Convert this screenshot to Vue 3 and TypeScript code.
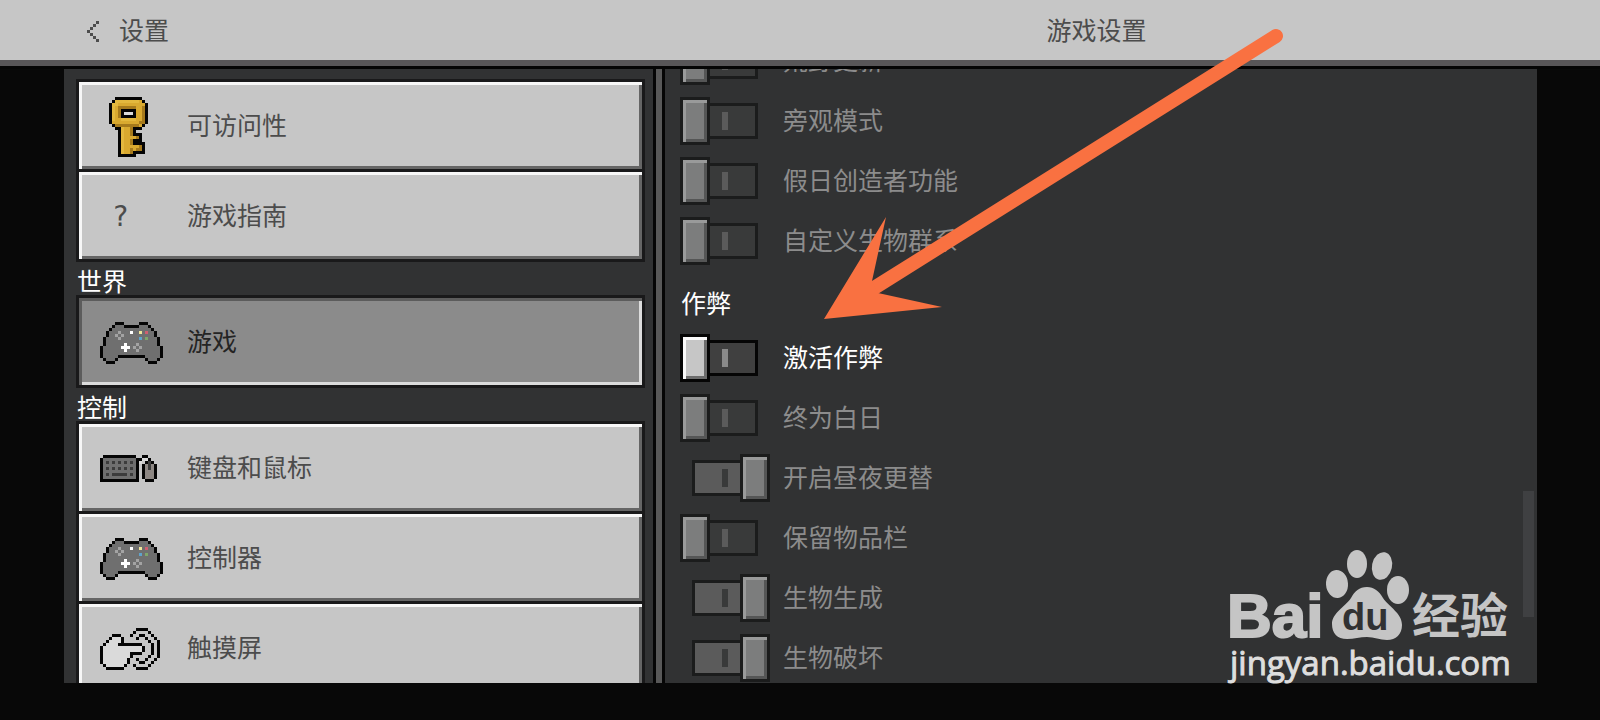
<script setup lang="ts">
import { ref } from 'vue'

interface PixelIcon {
  rows: string[]
}

interface NavItem {
  id: string
  label: string
  icon: PixelIcon | null
}

interface NavGroup {
  title: string
  items: NavItem[]
}

interface Toggle {
  id: string
  label: string
  on: boolean
  enabled: boolean
}

const palette: Record<string, string> = {
  B: '#050505',
  y: '#d9a92f',
  h: '#e3b83e',
  d: '#a67a1c',
  g: '#6f6f6f',
  l: '#a3a3a3',
  W: '#ffffff',
  w: '#dadada',
  k: '#3c3c3c',
  m: '#8d8783',
  Y: '#efe79a',
  R: '#cf5f70',
  U: '#5fa3cb',
  G: '#7fa66a',
  c: '#4d4d4d',
}

const keyIcon: PixelIcon = {
  rows: [
    '.....BBBBBBBBB..',
    '....BhhhhhhhhyB.',
    '...BhhyyyyyyyyyB',
    '...BhyddddddyydB',
    '...BhydBBBBByydB',
    '...BhydBwwwByydB',
    '...BhydBBBBByydB',
    '...BhyyhhhhhyydB',
    '...ByyyyyyyyyddB',
    '....BddddddddyB.',
    '.....BBhyydBBB..',
    '......BhyydB....',
    '......BhyydBBB..',
    '......BhyyyydB..',
    '......BhyydBBB..',
    '......BhyydBBBB.',
    '......BhyyyyydB.',
    '......BhyydyddB.',
    '......BhyydBBBB.',
    '......BBBBBB....',
  ],
}

const gamepadIcon: PixelIcon = {
  rows: [
    '.....BBB.....BBB.....',
    '....BgggBBBBBgggB....',
    '...BgggggggggggggB...',
    '..BggglgggWggYgRggB..',
    '..BgglglggggggggggB..',
    '.BgggglggggggUgGgggB.',
    '.BgggggggggggggggggB.',
    '.BggggggWggglggggggB.',
    'BggggggWWWglglggggggB',
    'BgggggggWggglgggggggB',
    'BgggggggggggggggggggB',
    'BgggggBBBBBBBBBgggggB',
    '.BgggB.........BgggB.',
    '..BBB...........BBB..',
  ],
}

const keyboardIcon: PixelIcon = {
  rows: [
    '.BBBBBBBBBBB..BB...',
    'BgggggggggggBBwwB..',
    'BgkgkgkgkgkgBw.BkB.',
    'BgggggggggggB.BmkmB',
    'BgkgkgkgkgkgB.BmkmB',
    'BgggggggggggB.BmmmB',
    'BgkgkkkkkgkgB.BmmmB',
    'BgggggggggggB.BmmmB',
    'BBBBBBBBBBBBB..BBB.',
  ],
}

const touchIcon: PixelIcon = {
  rows: [
    '............BBBB....',
    '...........B....B...',
    '....BBB...B..BB..B..',
    '...BwwwB....B..B..B.',
    '..BwwwwB........B..B',
    '.BwwwwBBBBBBBB...B.B',
    'BwwwwwwwwwwwwwB..B.B',
    'BwwwwwwwwwwwwwB..B.B',
    'BwwwwwwwwwBBBB...B.B',
    'BwwwwwwwwwB.....B..B',
    'BwwwwwwwwB..B..B..B.',
    'BwwwwwwwwB...BB..B..',
    '.BwwwwwwB..B....B...',
    '..BBBBBB....BBBB....',
  ],
}

const backIcon: PixelIcon = {
  rows: ['...c', '..c.', '.c..', 'c...', '.c..', '..c.', '...c'],
}

function pixels(icon: PixelIcon) {
  return icon.rows.flatMap((row, y) =>
    [...row]
      .map((key, x) => ({ x, y, fill: palette[key] }))
      .filter((p) => p.fill !== undefined),
  )
}

const groups: NavGroup[] = [
  {
    title: '',
    items: [
      { id: 'accessibility', label: '可访问性', icon: keyIcon },
      { id: 'guide', label: '游戏指南', icon: null },
    ],
  },
  { title: '世界', items: [{ id: 'game', label: '游戏', icon: gamepadIcon }] },
  {
    title: '控制',
    items: [
      { id: 'keyboard', label: '键盘和鼠标', icon: keyboardIcon },
      { id: 'controller', label: '控制器', icon: gamepadIcon },
      { id: 'touch', label: '触摸屏', icon: touchIcon },
    ],
  },
]

const selected = ref('game')

const experiments = ref<Toggle[]>([
  { id: 'wild', label: '荒野更新', on: false, enabled: false },
  { id: 'spectator', label: '旁观模式', on: false, enabled: false },
  { id: 'holiday', label: '假日创造者功能', on: false, enabled: false },
  { id: 'biomes', label: '自定义生物群系', on: false, enabled: false },
])

const cheats = ref<Toggle[]>([
  { id: 'cheats', label: '激活作弊', on: false, enabled: true },
  { id: 'always-day', label: '终为白日', on: false, enabled: false },
  { id: 'day-cycle', label: '开启昼夜更替', on: true, enabled: false },
  { id: 'keep-inventory', label: '保留物品栏', on: false, enabled: false },
  { id: 'mob-spawning', label: '生物生成', on: true, enabled: false },
  { id: 'mob-griefing', label: '生物破坏', on: true, enabled: false },
])
</script>

<template>
  <div class="screen">
    <header class="topbar">
      <button class="back" type="button">
        <svg class="pix" width="12" height="21" viewBox="0 0 4 7" aria-hidden="true">
          <rect v-for="(p, i) in pixels(backIcon)" :key="i" :x="p.x" :y="p.y" width="1" height="1" :fill="p.fill" />
        </svg>
        <span>设置</span>
      </button>
      <h1 class="title">游戏设置</h1>
    </header>

    <main class="body">
      <nav class="sidebar">
        <section v-for="group in groups" :key="group.title" class="group">
          <h2 v-if="group.title" class="group-title">{{ group.title }}</h2>
          <button
            v-for="item in group.items"
            :key="item.id"
            type="button"
            class="nav-item"
            :class="{ selected: item.id === selected }"
            @click="selected = item.id"
          >
            <span class="icon-slot">
              <svg
                v-if="item.icon"
                class="pix"
                :width="item.icon.rows[0].length * 3"
                :height="item.icon.rows.length * 3"
                :viewBox="`0 0 ${item.icon.rows[0].length} ${item.icon.rows.length}`"
                aria-hidden="true"
              >
                <rect v-for="(p, i) in pixels(item.icon)" :key="i" :x="p.x" :y="p.y" width="1" height="1" :fill="p.fill" />
              </svg>
              <span v-else class="question">?</span>
            </span>
            <span>{{ item.label }}</span>
          </button>
        </section>
      </nav>

      <div class="divider"></div>

      <section class="content">
        <div class="options">
          <label v-for="t in experiments" :key="t.id" class="option" :class="{ off: !t.enabled }">
            <input v-model="t.on" class="toggle" type="checkbox" :disabled="!t.enabled" />
            <span>{{ t.label }}</span>
          </label>
          <h2 class="options-title">作弊</h2>
          <label v-for="t in cheats" :key="t.id" class="option" :class="{ off: !t.enabled }">
            <input v-model="t.on" class="toggle" type="checkbox" :disabled="!t.enabled" />
            <span>{{ t.label }}</span>
          </label>
        </div>
        <div class="scroll-thumb"></div>
      </section>
    </main>

    <svg class="arrow" width="480" height="310" viewBox="815 20 480 310" aria-hidden="true">
      <path d="M1276 36 L874 288" stroke="#f97141" stroke-width="14" stroke-linecap="round" />
      <path d="M824 319 L886 217 L872 281 L878 293 L942 307 Z" fill="#f97141" />
    </svg>

    <svg class="watermark" width="300" height="145" viewBox="0 0 300 145">
      <g fill="#c5c5c5">
        <text class="wm-bai" x="7" y="97">Bai</text>
        <ellipse cx="117" cy="44" rx="11" ry="14" transform="rotate(-4 117 44)" />
        <ellipse cx="137" cy="24" rx="10" ry="14" />
        <ellipse cx="162" cy="26" rx="10" ry="14" transform="rotate(12 162 26)" />
        <ellipse cx="178" cy="50" rx="11" ry="14" />
        <path
          d="M147 47C154 47 159 51 163 58C169 67 182 73 182 85C182 94 176 100 167 100C160 100 154 97 147 97C140 97 134 99 127 99C117 99 112 93 112 84C112 73 125 67 131 58C135 51 139 47 147 47Z"
        />
        <text class="wm-cn" x="192" y="93">经验</text>
      </g>
      <text class="wm-du" x="122" y="90">du</text>
      <text class="wm-url" x="10" y="135">jingyan.baidu.com</text>
    </svg>
  </div>
</template>

<style>
body {
  background: #080808;
}
</style>

<style scoped>
.screen {
  position: relative;
  display: flex;
  flex-direction: column;
  height: 100vh;
  overflow: hidden;
  background: #080808;
  font-family: 'Liberation Sans', 'Noto Sans CJK SC', sans-serif;
  font-size: 25px;
  line-height: 33px;
  color: #fff;
}

.screen *,
.screen *::before,
.screen *::after {
  box-sizing: border-box;
}

h1,
h2 {
  margin: 0;
  font-size: inherit;
  font-weight: 400;
}

button {
  font: inherit;
  text-align: left;
  cursor: pointer;
}

.pix {
  display: block;
  shape-rendering: crispEdges;
}

.topbar,
.body {
  display: grid;
  grid-template-columns: 592fr 881fr;
  padding: 0 63px 0 64px;
}

.topbar {
  flex: none;
  align-items: center;
  height: 69px;
  background: #c6c6c6;
  border-bottom: 3px solid #050505;
  box-shadow: inset 0 -6px #585658;
  padding-bottom: 3px;
  color: #4c4c4c;
}

.back {
  display: flex;
  align-items: center;
  gap: 20px;
  padding: 0 0 0 23px;
  border: 0;
  background: none;
  color: inherit;
}

.title {
  text-align: center;
}

.body {
  grid-template-columns: 592fr 6px 875fr;
  flex: 1;
  min-height: 0;
  margin-bottom: 37px;
}

.divider {
  background: #585858;
}

.sidebar {
  min-height: 0;
  overflow: hidden;
  padding: 10px 8px 0 12px;
  background: #313233;
  border-right: 3px solid #050505;
}

.group {
  display: flex;
  flex-direction: column;
}

.group-title {
  height: 33px;
  padding-left: 1px;
  line-height: 41px;
}

.nav-item {
  display: flex;
  align-items: center;
  gap: 24px;
  height: 93px;
  padding: 2px 21px 0;
  border: 3px solid #19191a;
  border-radius: 0;
  background: #c6c6c6;
  box-shadow:
    inset 0 3px #f7f7f7,
    inset 3px 0 #f7f7f7,
    inset 0 -3px #656565,
    inset -3px 0 #656565;
  color: #4c4c4c;
}

.nav-item + .nav-item {
  margin-top: -3px;
}

.nav-item.selected {
  background: #8b8b8b;
  box-shadow:
    inset 0 3px #5c5c5c,
    inset 3px 0 #5c5c5c,
    inset 0 -3px #dcdcdc,
    inset -3px 0 #dcdcdc;
  color: #242424;
}

.icon-slot {
  width: 63px;
}

.question {
  padding-left: 12px;
  font-family: 'DejaVu Sans Mono', monospace;
  font-size: 28px;
}

.content {
  display: flex;
  justify-content: space-between;
  min-height: 0;
  overflow: hidden;
  padding: 0 3px 0 12px;
  background: #313233;
  border-left: 3px solid #050505;
}

.options {
  flex: 1;
  padding-left: 3px;
  margin-top: -38px;
}

.option {
  display: flex;
  align-items: center;
  gap: 13px;
  height: 60px;
}

.option.off {
  color: #8c8c8c;
}

.options-title {
  height: 57px;
  padding-left: 1px;
  line-height: 67px;
}

.toggle {
  --edge: #050505;
  --face: #c6c6c6;
  --light: #fafafa;
  --shade: #6d6d6d;
  --track: #404040;
  --mark: #8a8a8a;
  display: grid;
  flex: none;
  align-items: center;
  width: 90px;
  height: 48px;
  margin: 0;
  appearance: none;
}

.toggle:disabled {
  --edge: #1b1c1c;
  --face: #7c7d7d;
  --light: #999a9a;
  --shade: #555656;
  --track: #393a3a;
  --mark: #5b5b5b;
}

.toggle:checked {
  --track: #5b5b5b;
  --mark: #393a3a;
}

.toggle::before,
.toggle::after {
  content: '';
  grid-area: 1 / 1;
}

.toggle::before {
  justify-self: center;
  width: 66px;
  height: 36px;
  border: 3px solid var(--edge);
  background: linear-gradient(var(--mark), var(--mark)) center / 6px 18px no-repeat var(--track);
}

.toggle::after {
  justify-self: start;
  width: 30px;
  height: 48px;
  border: 3px solid var(--edge);
  background: var(--face);
  box-shadow:
    inset 0 3px var(--light),
    inset 3px 0 var(--light),
    inset 0 -3px var(--shade),
    inset -3px 0 var(--shade);
}

.toggle:checked::after {
  justify-self: end;
}

.scroll-thumb {
  align-self: flex-end;
  width: 11px;
  height: 126px;
  margin-bottom: 66px;
  background: #3f4042;
}

.arrow {
  position: absolute;
  top: 20px;
  left: 815px;
  fill: none;
  pointer-events: none;
}

.watermark {
  position: absolute;
  right: 80px;
  bottom: 35px;
  pointer-events: none;
}

.wm-bai {
  font: 700 62px 'Liberation Sans', sans-serif;
  stroke: #c5c5c5;
  stroke-width: 2px;
}

.wm-cn {
  font: 700 48px 'Noto Sans CJK SC', sans-serif;
}

.wm-du {
  font: 700 38px 'Liberation Sans', sans-serif;
  fill: #313233;
}

.wm-url {
  font: 400 33px 'Open Sans', sans-serif;
  fill: #dedede;
  stroke: #dedede;
  stroke-width: 1px;
}
</style>
